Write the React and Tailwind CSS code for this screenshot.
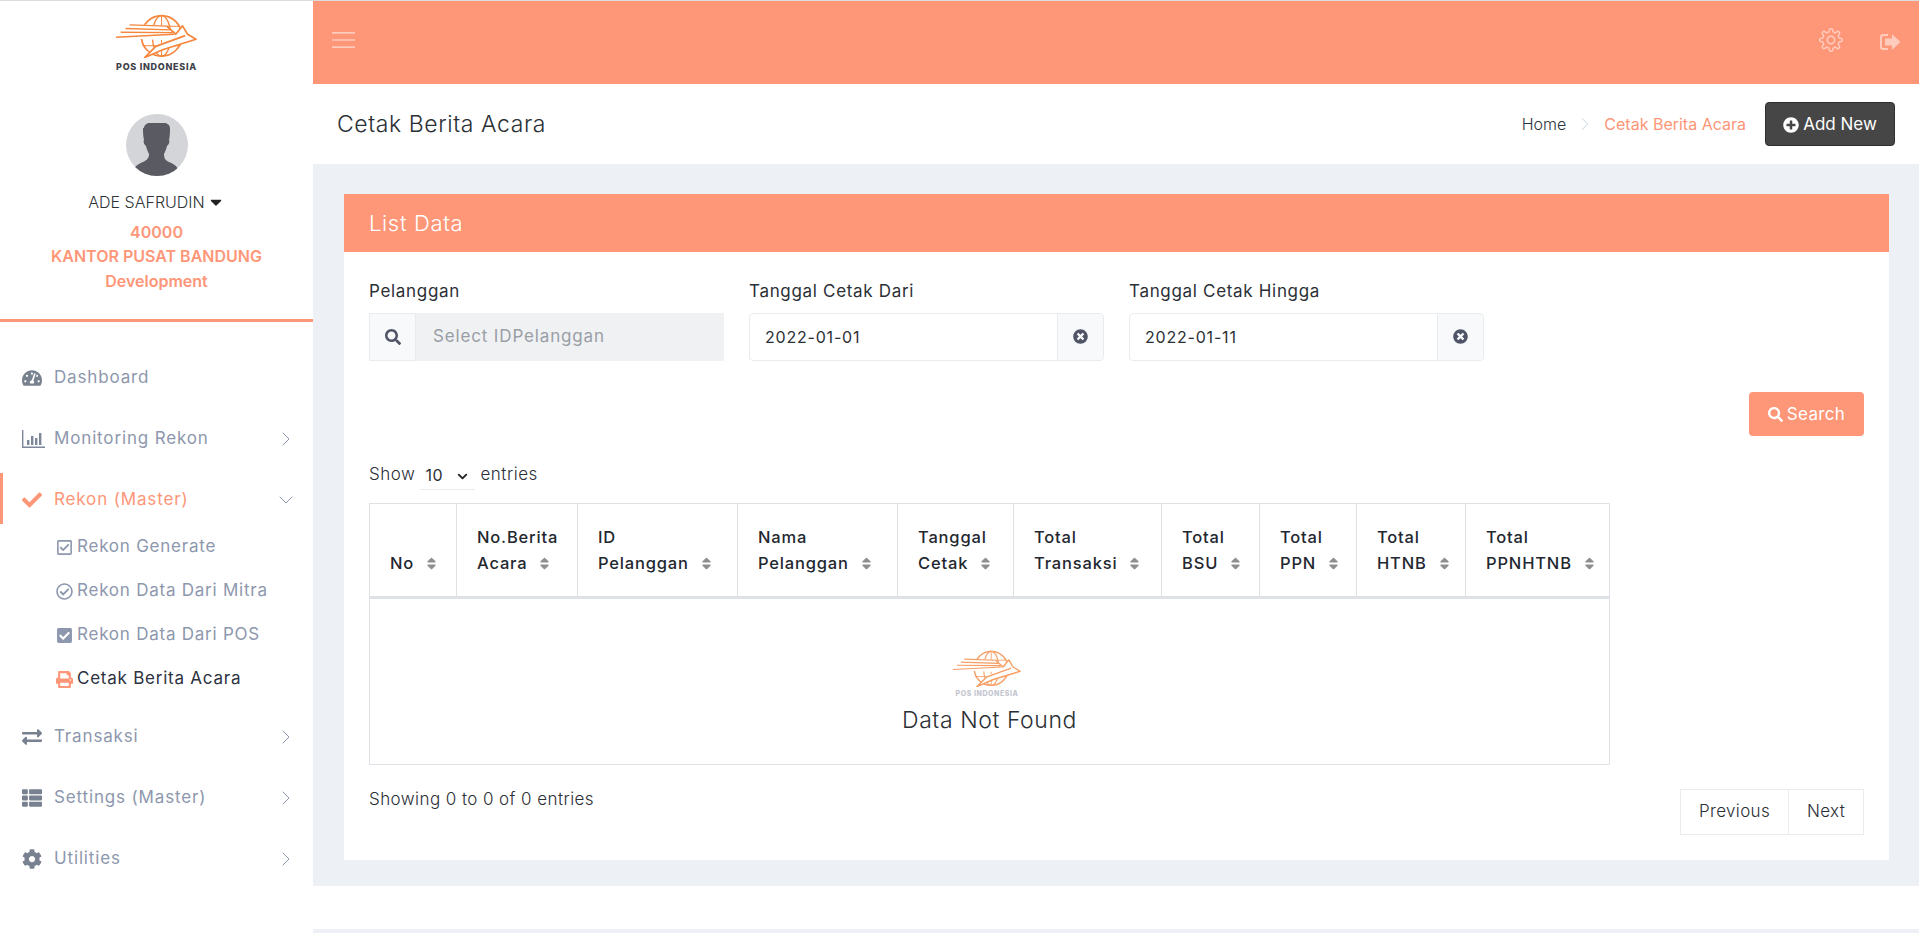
import React from "react";
import { ChevronRight, ChevronDown } from "lucide-react";
import {
  FaTachometerAlt, FaCheck, FaRegCheckSquare, FaRegCheckCircle, FaCheckSquare, FaPrint,
  FaExchangeAlt, FaThList, FaCog, FaSearch, FaTimesCircle, FaPlusCircle, FaSort, FaCaretDown,
} from "react-icons/fa";
import { SlSettings } from "react-icons/sl";

const FONT = "font-['Inter','Open_Sans',sans-serif]";

function Logo({ className = "", label = "text-[#3d4148] mt-[4px]", size = "text-[9px]" }) {
  return (
    <div className={`flex flex-col items-center ${className}`}>
      <svg viewBox="0 0 240 130" className="w-full block" fill="none">
        <circle cx="135" cy="65" r="60" stroke="#f6863c" strokeWidth="5" />
        <ellipse cx="135" cy="65" rx="27" ry="60" stroke="#f6863c" strokeWidth="4" />
        <path d="M135 5v120M82 36h106M78 94h114" stroke="#f6863c" strokeWidth="3" />
        {/* bird */}
        <path d="M40 30 L150 34 L177 60 L197 33 L212 60 L240 74 L170 94 L80 132 L115 96 L150 78 L0 70 Z" fill="#fff" />
        <path d="M150 36 L177 60 L197 35 L212 60 L237 75 L140 105 L85 129 L118 96 L205 64" stroke="#f6863c" strokeWidth="5" strokeLinejoin="round" />
        <path d="M40 32 L150 36 M28 43 L160 47 M14 54 L168 55 M0 69 L172 60" stroke="#f6863c" strokeWidth="4" />
      </svg>
      <span className={`${size} font-extrabold tracking-[0.08em] whitespace-nowrap leading-none ${label}`}>POS INDONESIA</span>
    </div>
  );
}

function Avatar() {
  return (
    <svg viewBox="0 0 62 62" className="w-[62px] h-[62px] block">
      <circle cx="31" cy="31" r="31" fill="#d3d5d9" />
      <clipPath id="av"><circle cx="31" cy="31" r="31" /></clipPath>
      <path
        clipPath="url(#av)"
        d="M18 14c0-3 3-5 6-5h14c3 0 6 2 6 5 0 4 0 8-1 12 1 1 0 5-2 6-1 4-2 6-3 8 0 4 1 6 5 8 3 1 7 3 9 7l-4 8H14l-6-8c2-4 6-6 9-7 4-2 6-4 6-8-1-2-2-4-3-8-2-1-3-5-2-6-1-4-1-8-1-12z"
        fill="#5a5b62"
      />
    </svg>
  );
}

function BarsIcon() {
  return (
    <svg viewBox="0 0 23 18" className="w-[23px] h-[18px] block" fill="#7d879c">
      <path d="M0 0h1.400v16.600H23V18H0z" />
      <path d="M5 10h2.400v5H5zM9 6h2.400v9H9zM13 8h2.400v7H13zM17 3h2.400v12H17z" />
    </svg>
  );
}

function ExitIcon() {
  return (
    <svg viewBox="0 0 22 18" className="w-[22px] h-[18px] block mt-[3px]" fill="currentColor">
      <path d="M4 1h5v2H4.500A1.500 1.500 0 0 0 3 4.500v9A1.500 1.500 0 0 0 4.500 15H9v2H4a3 3 0 0 1-3-3V4a3 3 0 0 1 3-3z" />
      <path d="M13 1l8.500 8-8.500 8v-4.500H6v-7h7z" />
    </svg>
  );
}

function NavItem({ icon, label, chevron, active }) {
  return (
    <div className={`h-[61px] flex items-center pl-[22px] pr-[15px] ${active ? "text-[#fe9678]" : "text-[#8d97ad]"}`}>
      <span className={`w-[32px] shrink-0 text-[20px] ${active ? "text-[#fe9678]" : "text-[#78818f]"}`}>{icon}</span>
      <span className="flex-1 text-[17px] tracking-[0.05em]">{label}</span>
      {chevron === "right" && <ChevronRight size={24} strokeWidth={1} className="text-[#8d97ad]" />}
      {chevron === "down" && <ChevronDown size={24} strokeWidth={1} className="text-[#8d97ad]" />}
    </div>
  );
}

function SubItem({ icon, label, current }) {
  return (
    <div className={`h-[44px] flex items-center pl-[56px] gap-[4px] text-[17px] tracking-[0.045em] ${current ? "text-[#2c3240]" : "text-[#8d97ad]"}`}>
      <span className={`text-[17px] ${current ? "text-[#fe9678]" : "text-[#8d97ad]"}`}>{icon}</span>
      {label}
    </div>
  );
}

function Sidebar() {
  return (
    <aside className="w-[313px] shrink-0 bg-white flex flex-col">
      <div className="h-[318px] flex flex-col items-center pt-[13px]">
        <Logo className="w-[81px]" />
        <div className="mt-[43px]"><Avatar /></div>
        <div className="mt-[14px] flex items-center gap-[2px] text-[16px] font-light text-[#2f3338] leading-[24px]">
          ADE SAFRUDIN <FaCaretDown size={18} className="text-[#222]" />
        </div>
        <div className="mt-[6px] text-center text-[16px] font-semibold leading-[24.5px] text-[#fe9678]">
          <div>40000</div>
          <div>KANTOR PUSAT BANDUNG</div>
          <div>Development</div>
        </div>
      </div>
      <div className="h-[3px] bg-[#fe9678]" />
      <nav className="pt-[25px]">
        <NavItem icon={<FaTachometerAlt />} label="Dashboard" />
        <NavItem icon={<BarsIcon />} label="Monitoring Rekon" chevron="right" />
        <div className="relative">
          <span className="absolute left-0 top-[4px] w-[3px] h-[51px] bg-[#fe9678]" />
          <NavItem icon={<FaCheck />} label="Rekon (Master)" chevron="down" active />
        </div>
        <div className="-mt-[5px] mb-[5px]">
          <SubItem icon={<FaRegCheckSquare />} label="Rekon Generate" />
          <SubItem icon={<FaRegCheckCircle />} label="Rekon Data Dari Mitra" />
          <SubItem icon={<FaCheckSquare />} label="Rekon Data Dari POS" />
          <SubItem icon={<FaPrint />} label="Cetak Berita Acara" current />
        </div>
        <NavItem icon={<FaExchangeAlt />} label="Transaksi" chevron="right" />
        <NavItem icon={<FaThList />} label="Settings (Master)" chevron="right" />
        <NavItem icon={<FaCog />} label="Utilities" chevron="right" />
      </nav>
    </aside>
  );
}

const COLUMNS = [
  { w: 87, lines: ["No"] },
  { w: 121, lines: ["No.Berita", "Acara"] },
  { w: 160, lines: ["ID", "Pelanggan"] },
  { w: 160, lines: ["Nama", "Pelanggan"] },
  { w: 116, lines: ["Tanggal", "Cetak"] },
  { w: 148, lines: ["Total", "Transaksi"] },
  { w: 98, lines: ["Total", "BSU"] },
  { w: 97, lines: ["Total", "PPN"] },
  { w: 109, lines: ["Total", "HTNB"] },
  { w: 144, lines: ["Total", "PPNHTNB"] },
];

function DataTable() {
  return (
    <table className="w-[1240px] table-fixed border-collapse">
      <colgroup>
        {COLUMNS.map((c, i) => <col key={i} style={{ width: c.w }} />)}
      </colgroup>
      <thead>
        <tr className="h-[94px]">
          {COLUMNS.map((c, i) => (
            <th key={i} className="border border-[#dee2e6] border-b-[3px] align-bottom pl-[20px] pb-[20px] text-left text-[16.5px] font-medium leading-[26px] text-[#23272f] tracking-[0.05em] whitespace-nowrap">
              {c.lines.slice(0, -1).map(l => <div key={l}>{l}</div>)}
              <div className="flex items-center gap-[10px]">
                {c.lines[c.lines.length - 1]}
                <FaSort size={15} className="text-[#8f8f8f]" />
              </div>
            </th>
          ))}
        </tr>
      </thead>
      <tbody>
        <tr>
          <td colSpan={10} className="h-[167px] border border-[#dee2e6] align-top pt-[51px]">
            <div className="flex flex-col items-center">
              <Logo className="w-[68px] opacity-80 -ml-[5px]" label="text-[#b4b8c4] mt-[3px]" size="text-[7px]" />
              <div className="mt-[8px] text-[23px] font-light text-[#2b2f36] leading-[30px] tracking-[0.025em]">Data Not Found</div>
            </div>
          </td>
        </tr>
      </tbody>
    </table>
  );
}

function Field({ label, children }) {
  return (
    <div className="w-[355px]">
      <div className="text-[17px] leading-[22px] text-[#2b2f36] tracking-[0.04em] mb-[11px]">{label}</div>
      {children}
    </div>
  );
}

function DateInput({ value }) {
  return (
    <div className="h-[48px] flex border border-[#e9ecef] rounded-[4px] overflow-hidden">
      <div className="flex-1 flex items-center pl-[15px] text-[16px] text-[#2b2f36] tracking-[0.05em]">{value}</div>
      <div className="w-[46px] bg-[#f8f9fa] border-l border-[#e9ecef] flex items-center justify-center">
        <FaTimesCircle size={15} className="text-[#4f5467] -mt-[2px]" />
      </div>
    </div>
  );
}

export default function App() {
  return (
    <div className={`${FONT} w-[1919px] h-[933px] overflow-hidden border-t border-[#dcdcdc] flex bg-white`}>
      <Sidebar />
      <main className="flex-1 flex flex-col min-w-0 bg-[#edf1f5]">
        {/* top bar */}
        <header className="h-[83px] shrink-0 bg-[#fe9678] flex items-center pl-[19px] pr-[18px] pb-[5px] text-white/50">
          <svg viewBox="0 0 24 18" className="w-[23px] h-[18px] text-white/70" stroke="currentColor" strokeWidth="1.300">
            <path d="M0 1.500h24M0 9h24M0 16.500h24" />
          </svg>
          <div className="ml-auto flex items-center gap-[36px]">
            <SlSettings size={24} />
            <ExitIcon />
          </div>
        </header>

        {/* page title */}
        <div className="h-[80px] shrink-0 bg-white flex items-center pl-[24px] pr-[24px]">
          <h1 className="text-[23px] font-light text-[#2b2f36] tracking-[0.025em]">Cetak Berita Acara</h1>
          <div className="ml-auto flex items-center text-[16px]">
            <span className="font-light text-[#2b3440]">Home</span>
            <ChevronRight size={22} strokeWidth={1} className="mx-[8px] text-[#c5d0d8]" />
            <span className="text-[#fe9678]">Cetak Berita Acara</span>
            <button className="ml-[19px] w-[130px] h-[44px] pt-[1px] rounded-[4px] bg-[#464646] border border-[#2f2f2f] text-white text-[17px] flex items-center justify-center gap-[4px]">
              <FaPlusCircle size={16} /> Add New
            </button>
          </div>
        </div>

        {/* content */}
        <div className="h-[722px] shrink-0 pt-[30px] pl-[31px] pr-[30px]">
          <section className="bg-white h-[666px]">
            <div className="h-[58px] bg-[#fe9678] flex items-center pl-[25px] text-white text-[22px] font-light tracking-[0.03em]">List Data</div>
            <div className="pl-[25px] pr-[25px] pt-[28px]">
              <div className="flex gap-[25px]">
                <Field label="Pelanggan">
                  <div className="h-[48px] flex">
                    <div className="w-[47px] bg-[#f8f9fa] border border-[#e9ecef] flex items-center justify-center">
                      <FaSearch size={16} className="text-[#4f5467]" />
                    </div>
                    <div className="flex-1 bg-[#eff1f3] flex items-center pl-[17px] text-[17px] text-[#9a9ea6] tracking-[0.05em]">Select IDPelanggan</div>
                  </div>
                </Field>
                <Field label="Tanggal Cetak Dari"><DateInput value="2022-01-01" /></Field>
                <Field label="Tanggal Cetak Hingga"><DateInput value="2022-01-11" /></Field>
              </div>

              <div className="flex justify-end mt-[31px]">
                <button className="w-[115px] h-[44px] pt-[1px] rounded-[4px] bg-[#fe9678] text-white text-[17px] tracking-[0.02em] flex items-center justify-center gap-[4px]">
                  <FaSearch size={15} /> Search
                </button>
              </div>

              <div className="flex items-center h-[32px] mt-[22px] text-[17px] font-light text-[#2b2f36] tracking-[0.03em]">
                <span className="mt-[2px]">Show</span>
                <span className="ml-[5px] w-[55px] h-[32px] pt-[2px] border-b border-[#e9ecef] flex items-center pl-[5px] pr-[5px] justify-between font-normal text-[16px]">
                  10 <ChevronDown size={15} strokeWidth={3} className="text-[#222] mt-[4px]" />
                </span>
                <span className="ml-[5px] mt-[2px]">entries</span>
              </div>

              <div className="mt-[13px]"><DataTable /></div>

              <div className="flex justify-between mt-[22px]">
                <div className="text-[17px] font-light leading-[24px] text-[#2b2f36] tracking-[0.025em]">Showing 0 to 0 of 0 entries</div>
                <div className="flex mt-[2px] text-[17px] font-light text-[#2b2f36] tracking-[0.02em]">
                  <div className="w-[109px] h-[46px] border border-[#e9ecef] flex items-center justify-center">Previous</div>
                  <div className="w-[75px] h-[46px] border border-l-0 border-[#e9ecef] flex items-center justify-center">Next</div>
                </div>
              </div>
            </div>
          </section>
        </div>

        <footer className="h-[43px] shrink-0 bg-white" />
      </main>
    </div>
  );
}
